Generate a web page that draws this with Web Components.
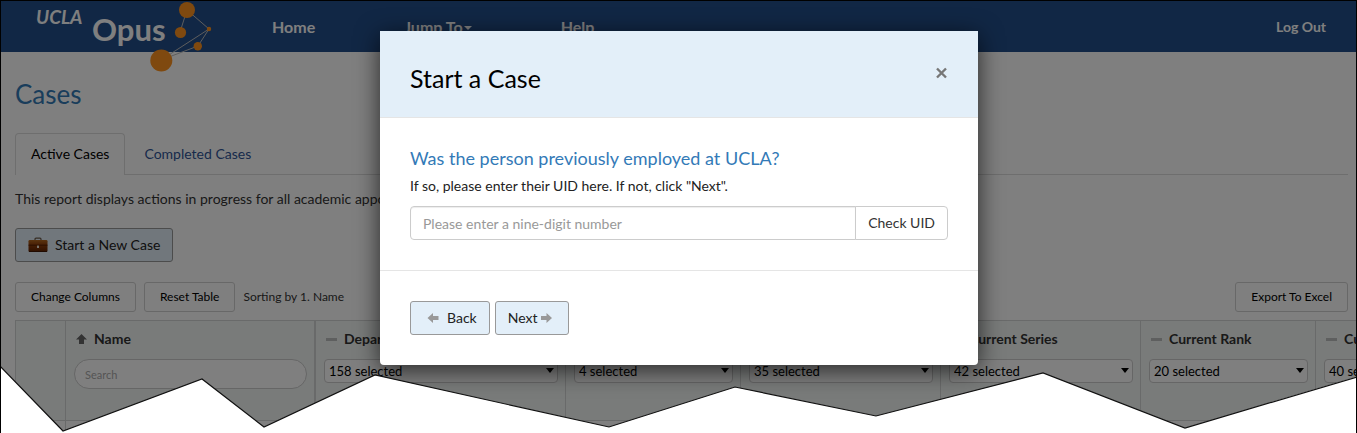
<!DOCTYPE html>
<html lang="en">
<head>
<meta charset="utf-8">
<title>UCLA Opus – Cases</title>
<style>
html, body { margin: 0; background: #fff; }
body { font: 14px/20px Lato, "Liberation Sans", sans-serif; color: #333; }
</style>
</head>
<body>
<opus-app></opus-app>

<template id="t-app">
<style>
:host { display: block; position: relative; box-sizing: border-box; min-height: 100vh; overflow: hidden; border: 1px solid #000; border-bottom: 0; background: #fff; }
.content { padding: 0 8px 0 14px; }
h1 { margin: 28px 0 25px; font-size: 26px; line-height: 28px; font-weight: 400; color: #337ab7; }
.report { margin: 14px 0 19px; color: #333; }
.tools { display: flex; align-items: center; gap: 8px; margin: 20px 0 8px; }
.tools span { font-size: 12px; }
.tools opus-button:last-child { margin-left: auto; }
.shade { position: absolute; inset: 0; display: flex; justify-content: center; align-items: flex-start; padding: 30px 20px 0 21px; background: rgba(0,0,0,.5); }
.torn { position: absolute; left: -1px; bottom: 0; width: calc(100% + 2px); height: 70px; display: block; }
</style>
<opus-nav></opus-nav>
<main class="content">
  <h1>Cases</h1>
  <opus-tabs></opus-tabs>
  <p class="report">This report displays actions in progress for all academic appointees.</p>
  <opus-button kind="primary"><svg slot="before" width="20" height="16" viewBox="0 0 20 16" aria-hidden="true">
    <defs><linearGradient id="g" x1="0" y1="0" x2="0" y2="1"><stop offset="0" stop-color="#b86a20"/><stop offset=".45" stop-color="#8a3a08"/><stop offset="1" stop-color="#5e2200"/></linearGradient></defs>
    <path d="M7 4V2.2Q7 1.2 8 1.2h4q1 0 1 1V4" fill="none" stroke="#6b5a4a" stroke-width="1.2"/>
    <rect x=".5" y="3" width="19" height="12" rx="1.2" fill="url(#g)"/><path d="M.5 8.2h19" stroke="#4a1a00" stroke-width=".8"/><path d="M1 14.5h18" stroke="#401500"/>
    <rect x="9" y="8.6" width="2" height="2.4" fill="#f2e8d8"/></svg>Start a New Case</opus-button>
  <div class="tools">
    <opus-button kind="small">Change Columns</opus-button>
    <opus-button kind="small">Reset Table</opus-button>
    <span>Sorting by 1. Name</span>
    <opus-button kind="small">Export To Excel</opus-button>
  </div>
  <opus-table></opus-table>
</main>
<div class="shade"><opus-modal></opus-modal></div>
<svg class="torn" viewBox="0 363 1357 70" preserveAspectRatio="none" aria-hidden="true">
  <path d="M-2 364L0 366 63 431 202 379 264 427 375 375 609 427 735 387 876 416 1043 373 1185 428 1359 376V436H-2Z" fill="#fff"/>
  <path d="M0 366L63 431 202 379 264 427 375 375 609 427 735 387 876 416 1043 373 1185 428 1357 377" fill="none" stroke="#111" stroke-width="1.2"/>
</svg>
</template>

<template id="t-nav">
<style>
:host { display: block; background: #224e8a; }
nav { display: flex; align-items: center; height: 51px; padding: 0 30px 0 34px; }
.logo { position: relative; flex: none; width: 182px; height: 51px; }
.logo svg { position: absolute; left: 0; top: 0; overflow: visible; }
a { color: #fff; text-decoration: none; font-weight: 700; }
.links { display: flex; gap: 89px; margin-left: 55px; }
.links a { font-size: 16px; }
.out { margin-left: auto; font-size: 14px; }
.caret { display: inline-block; border: 4px solid transparent; border-top-color: #fff; border-bottom: 0; vertical-align: middle; margin-left: 1px; }
</style>
<nav>
  <a class="logo" href="#home" aria-label="UCLA Opus">
    <svg width="182" height="72" viewBox="35 1 182 72">
      <g stroke="#bbb" stroke-width="1" fill="none"><path d="M187 10L180 32M187 10L209 29 161 60M209 29L198 46 161 60"/></g>
      <g fill="#ff931e"><circle cx="187" cy="10" r="8"/><circle cx="180.5" cy="32.5" r="5.6"/><circle cx="209" cy="29" r="2.2"/><circle cx="197.8" cy="46.3" r="4.2"/><circle cx="161.3" cy="60.5" r="11"/></g>
      <text x="36" y="24" font-family="Lato" font-size="19" font-weight="700" font-style="italic" fill="#fff">UCLA</text>
      <text x="92" y="41" font-family="Lato" font-size="31" font-weight="700" fill="#fff">Opus</text>
    </svg>
  </a>
  <div class="links"><a href="#home">Home</a><a href="#jump">Jump To<span class="caret"></span></a><a href="#help">Help</a></div>
  <a class="out" href="#logout">Log Out</a>
</nav>
</template>

<template id="t-tabs">
<style>
:host { display: block; }
div { display: flex; gap: 2px; border-bottom: 1px solid #ddd; }
button { font: inherit; padding: 10px 16px; border: 1px solid transparent; border-bottom: 0; border-radius: 4px 4px 0 0; background: none; color: #2f5597; }
button[aria-selected=true] { padding: 10px 15px 11px; margin-bottom: -1px; background: #fff; border-color: #ddd; color: #000; }
</style>
<div role="tablist"><button role="tab" aria-selected="true">Active Cases</button><button role="tab" aria-selected="false">Completed Cases</button></div>
</template>

<template id="t-button">
<style>
:host { display: inline-block; vertical-align: top; }
button { display: flex; align-items: center; gap: 7px; box-sizing: border-box; height: 34px; padding: 0 12px; font: inherit; color: #222; background: #e3eff9; border: 1px solid #999; border-radius: 3px; white-space: nowrap; }
:host([kind=small]) button { height: 30px; padding: 0 15px; font-size: 12px; color: #000; background: #fff; border-color: #d0d0d0; }
:host([kind=nav]) button { gap: 4px; }
:host([kind=addon]) button { color: #333; background: #fff; border-color: #ccc; border-radius: 0 4px 4px 0; margin-left: -1px; }
</style>
<button type="button"><slot name="before"></slot><span><slot></slot></span><slot name="after"></slot></button>
</template>

<template id="t-table">
<style>
:host { display: block; }
table { width: 1476px; table-layout: fixed; border-collapse: separate; border-spacing: 0; border-top: 1px solid #d2d4d4; border-left: 1px solid #d2d4d4; }
th { box-sizing: border-box; height: 100px; padding: 8px 7px 0 8px; vertical-align: top; text-align: left; background: #f2f6f5; border-right: 1px solid #d2d4d4; border-bottom: 1px solid #d2d4d4; }
td { height: 12px; padding: 0; border-right: 1px solid #d2d4d4; }
tr > :nth-child(2) { border-right-width: 2px; }
.head { display: flex; align-items: center; gap: 7px; height: 20px; margin-bottom: 10px; padding-left: 2px; white-space: nowrap; }
.mark { width: 11px; height: 3px; background: #bdbfbf; }
select, input { display: block; box-sizing: border-box; width: 100%; font: 13px Lato, sans-serif; border: 1px solid #ccc; background: #fff; }
select { height: 24px; padding: 0 4px; border-radius: 4px; color: #000; appearance: none; }
.pick { position: relative; }
.pick::after { content: ""; position: absolute; right: 4px; top: 9px; border: 4px solid transparent; border-top: 5px solid #000; border-bottom: 0; pointer-events: none; }
input { height: 30px; padding: 0 10px; border-radius: 15px; font-size: 11px; }
input::placeholder { color: #aaa; }
</style>
<table><colgroup></colgroup><thead><tr></tr></thead><tbody><tr></tr></tbody></table>
</template>

<template id="t-modal">
<style>
:host { display: block; flex: 0 1 598px; background: #fff; border-radius: 0 0 4px 4px; box-shadow: 0 5px 24px rgba(0,0,0,.7); overflow: hidden; }
header { display: flex; justify-content: space-between; align-items: flex-start; padding: 32px 30px 24px; background: #e3eff9; border-bottom: 1px solid #e5e5e5; }
h2 { margin: 0; font-size: 25px; line-height: 30px; font-weight: 400; color: #000; }
.x { width: 14px; height: 20px; padding: 0; border: 0; background: none; color: #777; }
.x svg { display: block; margin: auto; }
.body { padding: 30px; border-bottom: 1px solid #e5e5e5; }
h3 { margin: 0 0 8px; font-size: 18px; line-height: 20px; font-weight: 400; color: #337ab7; }
label { display: block; margin-bottom: 10px; color: #222; }
.group { display: flex; }
input { flex: 1; min-width: 0; box-sizing: border-box; height: 34px; padding: 0 12px; font: inherit; border: 1px solid #ccc; border-radius: 4px 0 0 4px; box-shadow: inset 0 1px 1px rgba(0,0,0,.075); }
input::placeholder { color: #999; }
footer { display: flex; gap: 5px; padding: 30px; }
footer svg { display: block; }
</style>
<header><h2>Start a Case</h2><button class="x" aria-label="Close"><svg width="11" height="20" viewBox="0 0 11 20"><path d="M1 5.5l9 9M10 5.5l-9 9" stroke="currentColor" stroke-width="2.4"/></svg></button></header>
<div class="body">
  <h3>Was the person previously employed at UCLA?</h3>
  <label for="uid">If so, please enter their UID here. If not, click "Next".</label>
  <div class="group"><input id="uid" type="text" placeholder="Please enter a nine-digit number"><opus-button kind="addon">Check UID</opus-button></div>
</div>
<footer>
  <opus-button kind="nav"><svg slot="before" width="20" height="12" viewBox="0 0 20 12" aria-hidden="true"><path d="M4.5 6L10 1v3h5.500v4H10v3z" fill="#999"/></svg>Back</opus-button>
  <opus-button kind="nav">Next<svg slot="after" width="15" height="12" viewBox="0 0 15 12" aria-hidden="true"><path d="M11 6L5.500 1v3H0v4h5.500v3z" fill="#999"/></svg></opus-button>
</footer>
</template>

<script>
function define(name, templateId, setup) {
  customElements.define(name, class extends HTMLElement {
    constructor() {
      super();
      const root = this.attachShadow({ mode: 'open' });
      root.append(document.getElementById(templateId).content.cloneNode(true));
      if (setup) setup(root, this);
    }
  });
}
const columns = [
  { width: 50 },
  { width: 250, title: 'Name', search: true },
  { width: 250, title: 'Department', value: '158 selected' },
  { width: 175, title: 'School', value: '4 selected' },
  { width: 200, title: 'Action Type', value: '35 selected' },
  { width: 200, title: 'Current Series', value: '42 selected' },
  { width: 175, title: 'Current Rank', value: '20 selected' },
  { width: 175, title: 'Current Step', value: '40 selected' }
];
define('opus-button', 't-button');
define('opus-nav', 't-nav');
define('opus-tabs', 't-tabs');
define('opus-table', 't-table', root => {
  const up = '<svg width="11" height="12" viewBox="0 0 11 12" aria-hidden="true"><path d="M5.5 1L11 6.5H8V11H3V6.5H0z" fill="#666"/></svg>';
  root.querySelector('colgroup').innerHTML = columns.map(c => `<col style="width:${c.width}px">`).join('');
  root.querySelector('thead tr').innerHTML = columns.map(c => !c.title ? '<th></th>' :
    `<th scope="col"><div class="head">${c.search ? up : '<span class="mark"></span>'}<span>${c.title}</span></div>` +
    (c.search ? `<input type="search" placeholder="Search" aria-label="${c.title}">`
      : `<div class="pick"><select aria-label="${c.title}"><option>${c.value}</option></select></div>`) + '</th>').join('');
  root.querySelector('tbody tr').innerHTML = columns.map(() => '<td></td>').join('');
});
define('opus-modal', 't-modal', (root, host) => {
  queueMicrotask(() => { host.setAttribute('role', 'dialog'); host.setAttribute('aria-label', 'Start a Case'); });
});
define('opus-app', 't-app');
</script>
</body>
</html>
